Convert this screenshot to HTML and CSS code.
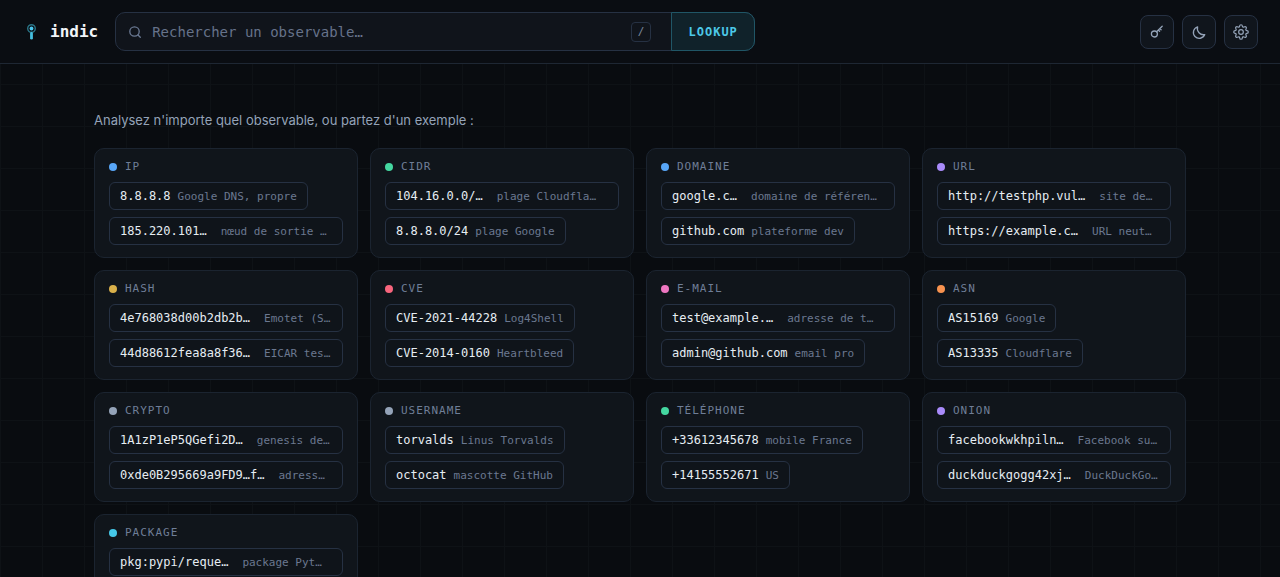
FILE: index.html
```html
<!DOCTYPE html>
<html lang="fr">
<head>
<meta charset="UTF-8">
<meta name="viewport" content="width=device-width, initial-scale=1">
<title>indic</title>
<link rel="stylesheet" href="styles.css">
</head>
<body>

<header class="topbar">
  <a class="brand" href="#">
    <svg width="20" height="20" viewBox="0 0 20 20" fill="none" aria-hidden="true">
      <circle cx="9.5" cy="6.5" r="3.8" stroke="#2a7486" stroke-width="1.4"/>
      <circle cx="9.5" cy="6.5" r="1.9" fill="#4cc9f0"/>
      <path d="M9.5 11.5v4.7" stroke="#45bfe0" stroke-width="2.8" stroke-linecap="round"/>
    </svg>
    <span>indic</span>
  </a>

  <form class="search" role="search">
    <svg class="search-icon" width="14" height="14" viewBox="0 0 14 14" fill="none" stroke="currentColor" stroke-width="1.3" stroke-linecap="round" aria-hidden="true">
      <circle cx="6.5" cy="6.5" r="4.7"/>
      <path d="M10 10l2.3 2.3"/>
    </svg>
    <input class="search-input" type="text" aria-label="Rechercher un observable" placeholder="Rechercher un observable…">
    <kbd class="search-key">/</kbd>
    <button class="search-btn" type="submit">LOOKUP</button>
  </form>

  <nav class="actions">
    <button class="icon-btn" type="button" aria-label="Clés API">
      <svg width="16" height="16" viewBox="0 0 16 16" fill="none" stroke="currentColor" stroke-width="1.3" stroke-linecap="round" stroke-linejoin="round">
        <circle cx="5.4" cy="10" r="3"/>
        <path d="M7.6 7.8L13.2 2.2M10.9 4.5l1.2 1.2M9.4 6l1.2 1.2"/>
      </svg>
    </button>
    <button class="icon-btn" type="button" aria-label="Thème">
      <svg width="16" height="16" viewBox="0 0 16 16" fill="none" stroke="currentColor" stroke-width="1.3" stroke-linejoin="round">
        <path d="M13.8 10.6A5.9 5.9 0 1 1 6.6 2.8a6.2 6.2 0 0 0 7.2 7.8z"/>
      </svg>
    </button>
    <button class="icon-btn" type="button" aria-label="Paramètres">
      <svg width="16" height="16" viewBox="0 0 24 24" fill="none" stroke="currentColor" stroke-width="1.8" stroke-linejoin="round">
        <circle cx="12" cy="12" r="3.5"/>
        <path d="M10 3.1a2 2 0 0 1 4 0 1.7 1.7 0 0 0 2.9 1.2 2 2 0 0 1 2.8 2.8 1.7 1.7 0 0 0 1.2 2.9 2 2 0 0 1 0 4 1.7 1.7 0 0 0-1.2 2.9 2 2 0 0 1-2.8 2.8 1.7 1.7 0 0 0-2.9 1.2 2 2 0 0 1-4 0 1.7 1.7 0 0 0-2.9-1.2 2 2 0 0 1-2.8-2.8 1.7 1.7 0 0 0-1.2-2.9 2 2 0 0 1 0-4 1.7 1.7 0 0 0 1.2-2.9 2 2 0 0 1 2.8-2.8A1.7 1.7 0 0 0 10 3.1z"/>
      </svg>
    </button>
  </nav>
</header>

<main class="page">
  <p class="intro">Analysez n'importe quel observable, ou partez d'un exemple :</p>

  <div class="grid">
    <section class="card">
      <h2 class="card-title blue">IP</h2>
      <button class="chip" type="button">8.8.8.8 <span class="hint">Google DNS, propre</span></button>
      <button class="chip wide" type="button">185.220.101… <span class="hint">nœud de sortie …</span></button>
    </section>
    <section class="card">
      <h2 class="card-title green">CIDR</h2>
      <button class="chip wide" type="button">104.16.0.0/… <span class="hint">plage Cloudfla…</span></button>
      <button class="chip" type="button">8.8.8.0/24 <span class="hint">plage Google</span></button>
    </section>
    <section class="card">
      <h2 class="card-title blue">DOMAINE</h2>
      <button class="chip wide" type="button">google.c… <span class="hint">domaine de référen…</span></button>
      <button class="chip" type="button">github.com <span class="hint">plateforme dev</span></button>
    </section>
    <section class="card">
      <h2 class="card-title purple">URL</h2>
      <button class="chip wide" type="button">http://testphp.vul… <span class="hint">site de…</span></button>
      <button class="chip wide" type="button">https://example.c… <span class="hint">URL neut…</span></button>
    </section>
    <section class="card">
      <h2 class="card-title yellow">HASH</h2>
      <button class="chip wide" type="button">4e768038d00b2db2b… <span class="hint">Emotet (S…</span></button>
      <button class="chip wide" type="button">44d88612fea8a8f36… <span class="hint">EICAR tes…</span></button>
    </section>
    <section class="card">
      <h2 class="card-title red">CVE</h2>
      <button class="chip" type="button">CVE-2021-44228 <span class="hint">Log4Shell</span></button>
      <button class="chip" type="button">CVE-2014-0160 <span class="hint">Heartbleed</span></button>
    </section>
    <section class="card">
      <h2 class="card-title pink">E-MAIL</h2>
      <button class="chip wide" type="button">test@example.… <span class="hint">adresse de t…</span></button>
      <button class="chip" type="button">admin@github.com <span class="hint">email pro</span></button>
    </section>
    <section class="card">
      <h2 class="card-title orange">ASN</h2>
      <button class="chip" type="button">AS15169 <span class="hint">Google</span></button>
      <button class="chip" type="button">AS13335 <span class="hint">Cloudflare</span></button>
    </section>
    <section class="card">
      <h2 class="card-title gray">CRYPTO</h2>
      <button class="chip wide" type="button">1A1zP1eP5QGefi2D… <span class="hint">genesis de…</span></button>
      <button class="chip wide" type="button">0xde0B295669a9FD9…f… <span class="hint">adress…</span></button>
    </section>
    <section class="card">
      <h2 class="card-title gray">USERNAME</h2>
      <button class="chip" type="button">torvalds <span class="hint">Linus Torvalds</span></button>
      <button class="chip" type="button">octocat <span class="hint">mascotte GitHub</span></button>
    </section>
    <section class="card">
      <h2 class="card-title green">TÉLÉPHONE</h2>
      <button class="chip" type="button">+33612345678 <span class="hint">mobile France</span></button>
      <button class="chip" type="button">+14155552671 <span class="hint">US</span></button>
    </section>
    <section class="card">
      <h2 class="card-title purple">ONION</h2>
      <button class="chip wide" type="button">facebookwkhpiln… <span class="hint">Facebook su…</span></button>
      <button class="chip wide" type="button">duckduckgogg42xj… <span class="hint">DuckDuckGo…</span></button>
    </section>
    <section class="card">
      <h2 class="card-title cyan">PACKAGE</h2>
      <button class="chip wide" type="button">pkg:pypi/reque… <span class="hint">package Pyt…</span></button>
    </section>
  </div>
</main>

</body>
</html>
```
FILE: styles.css
```css
* {
  box-sizing: border-box;
}
body {
  margin: 0;
  min-height: 100vh;
  background-color: #090c10;
  background-image:
    linear-gradient(to right, #0e1216 1px, transparent 1px),
    linear-gradient(to bottom, #0e1216 1px, transparent 1px);
  background-size: 42px 42px;
  color: #e6edf3;
  font-family: Inter, "Liberation Sans", sans-serif;
}
button, input, kbd, h2, .brand {
  font-family: "DejaVu Sans Mono", "Liberation Mono", monospace;
}

/* top bar */
.topbar {
  display: flex;
  align-items: center;
  gap: 17px;
  padding: 12px 22px;
  background: #0a0d12;
  border-bottom: 1px solid #1e2733;
}
.brand {
  display: flex;
  align-items: center;
  gap: 8px;
  color: #f0f4f8;
  font-size: 16px;
  font-weight: 700;
  text-decoration: none;
}
.search {
  display: flex;
  align-items: center;
  flex: 0 1 640px;
  height: 39px;
  background: #10141b;
  border: 1px solid #263143;
  border-radius: 10px;
}
.search-icon {
  margin-left: 12px;
  color: #6b7a94;
}
.search-input {
  flex: 1;
  min-width: 0;
  padding: 0 10px;
  background: none;
  border: none;
  outline: none;
  color: #e6edf3;
  font-size: 14px;
}
.search-input::placeholder {
  color: #66728a;
}
.search-key {
  width: 20px;
  margin-right: 20px;
  border: 1px solid #263143;
  border-radius: 4px;
  color: #7b879c;
  font-size: 11px;
  line-height: 18px;
  text-align: center;
}
.search-btn {
  width: 84px;
  height: 39px;
  margin-right: -1px;
  background: #10222a;
  border: 1px solid #205666;
  border-radius: 0 10px 10px 0;
  color: #4cc9e8;
  font-size: 12px;
  font-weight: 700;
  letter-spacing: 1px;
}
.actions {
  display: flex;
  gap: 8px;
  margin-left: auto;
}
.icon-btn {
  display: flex;
  align-items: center;
  justify-content: center;
  width: 34px;
  height: 34px;
  padding: 0;
  background: #10151c;
  border: 1px solid #263143;
  border-radius: 8px;
  color: #94a3b8;
}

/* examples */
.page {
  max-width: 1140px;
  margin: 0 auto;
  padding: 46px 24px;
}
.intro {
  margin: 0 0 18px;
  color: #94a3b8;
  font-size: 13px;
  line-height: 20px;
}
.grid {
  display: grid;
  grid-template-columns: repeat(4, 1fr);
  gap: 12px;
}
.card {
  display: flex;
  flex-direction: column;
  align-items: flex-start;
  gap: 7px;
  padding: 12px 14px;
  background: #10151b;
  border: 1px solid #1b2430;
  border-radius: 10px;
}
.card-title {
  display: flex;
  align-items: center;
  gap: 8px;
  margin: 0 0 2px;
  color: #6f7e97;
  font-size: 11px;
  font-weight: 400;
  line-height: 12px;
  letter-spacing: 1px;
}
.card-title::before {
  content: "";
  width: 8px;
  height: 8px;
  border-radius: 50%;
  background: currentColor;
}
.blue::before { background: #58a6f7; }
.green::before { background: #44d7a0; }
.purple::before { background: #a98bfa; }
.yellow::before { background: #d9b04a; }
.red::before { background: #f7657d; }
.pink::before { background: #ee76c0; }
.orange::before { background: #f7924f; }
.gray::before { background: #94a3b8; }
.cyan::before { background: #45c8e8; }

.chip {
  display: flex;
  align-items: center;
  gap: 7px;
  height: 28px;
  padding: 0 10px;
  background: #0f141a;
  border: 1px solid #263143;
  border-radius: 6px;
  color: #e6edf3;
  font-size: 12px;
  white-space: nowrap;
  cursor: pointer;
}
.chip.wide {
  width: 100%;
  gap: 14px;
}
.hint {
  color: #6b7890;
  font-size: 11px;
}
```
